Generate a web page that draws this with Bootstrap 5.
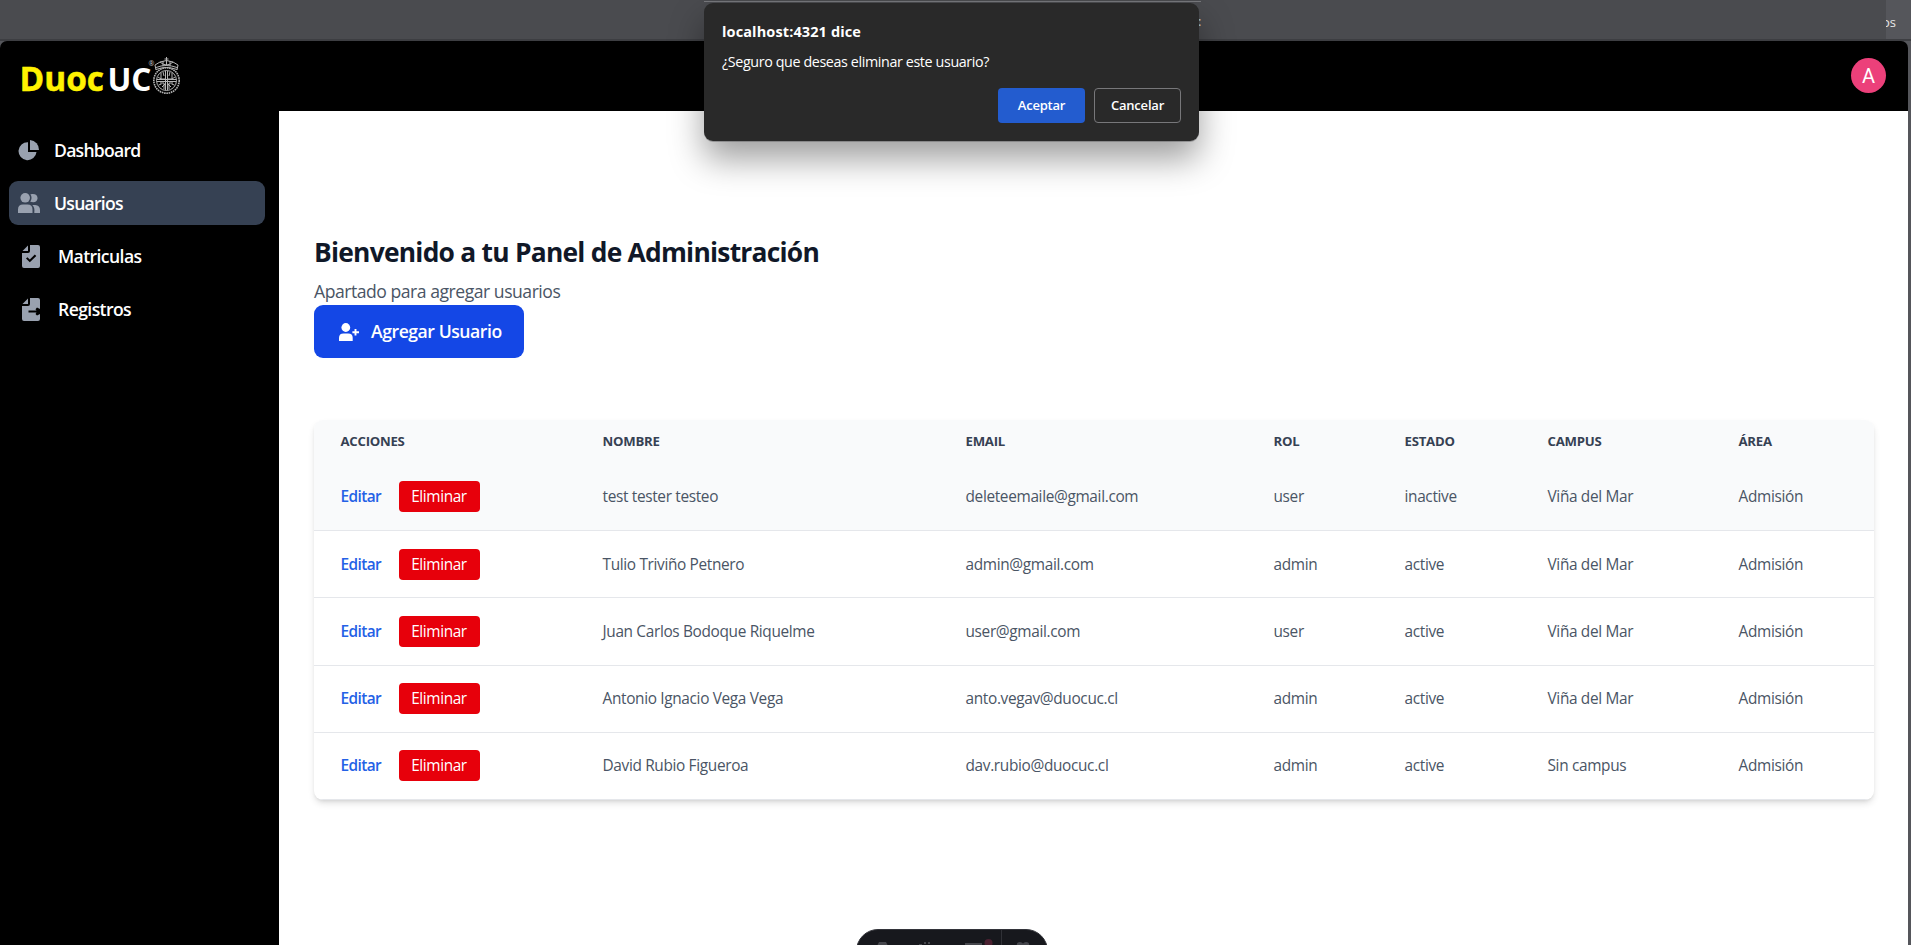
<!DOCTYPE html>
<html lang="es">
<head>
<meta charset="utf-8">
<meta name="viewport" content="width=device-width, initial-scale=1">
<title>Panel de Administración</title>
<link href="https://cdn.jsdelivr.net/npm/bootstrap@5.3.0/dist/css/bootstrap.min.css" rel="stylesheet">
<style>
  body { font-family: "Open Sans", "Noto Sans", sans-serif; font-size: 15.4px; color: #4a5565; background: #55565b; height: 945px; overflow: hidden; }
  .browser-bar { height: 41px; background: #4a4b4f; border-bottom: 2px solid #3d3e42; }
  .bar-end { width: 25px; background: #55565b; color: #e8e8e8; font-size: 13px; line-height: 45px; overflow: hidden; }
  .bar-end span { margin-left: -4px; }
  .app-shell { width: 1908px; height: 904px; background: #000; border-radius: 7px 7px 0 0; overflow: hidden; }
  .app-head { height: 70px; padding: 0 21px 0 18px; }
  .brand-mark { width: 170px; height: 54px; margin-top: 0; }
  .avatar { width: 35px; height: 35px; background: #ec407a; color: #fff; font: 20px Roboto, sans-serif; margin: 0 1px 1px 0; }
  .side { width: 279px; padding: 17px 14px 0 9px; }
  .side .nav-link { height: 44px; padding: 0 0 0 9px; margin-bottom: 9px; border-radius: 9px; color: #fff; font-size: 17.6px; font-weight: 600; letter-spacing: -.75px; }
  .side .nav-link.active { background: #364153; color: #fff; }
  .side svg { fill: #99a1af; width: 22px; height: 22px; flex: none; }
  .side .nav-link span { margin-left: 14px; line-height: 24px; }
  .side .doc svg { width: 18px; height: 23px; margin-left: 4px; }
  .side .doc span { margin-left: 18px; letter-spacing: -.6px; }
  .page { padding: 121px 34px 0 35px; }
  h1.title { font-size: 26.4px; font-weight: 700; color: #101828; line-height: 40px; margin: 0; letter-spacing: -.76px; }
  .sub { font-size: 17.6px; line-height: 28px; height: 33px; padding-top: 5px; letter-spacing: -.48px; }
  .btn-add { width: 210px; height: 53px; background: #1447e6; color: #fff; border-radius: 9px; font-size: 17.6px; font-weight: 600; letter-spacing: -.45px; padding: 0 0 0 25px; border: 0; }
  .btn-add:hover { background: #1447e6; color: #fff; }
  .user-card { margin: 62px 1px 0 0; border-radius: 9px; overflow: hidden; background: #fff; box-shadow: 0 4px 7px -1px rgba(0,0,0,.13), 0 2px 4px -2px rgba(0,0,0,.12); }
  .user-table { table-layout: fixed; width: 1560px; color: #4a5565; border-collapse: collapse; letter-spacing: -.34px; }
  .user-table th { height: 43.5px; padding: 1px 0 0 26.5px; font-size: 13.2px; font-weight: 700; color: #364153; letter-spacing: -.25px; }
  .user-table td { height: 67.2px; padding: 0 0 0 26.5px; border-bottom: 1px solid #e5e7eb; white-space: nowrap; }
  .user-table thead, .row-hover { background: #f9fafb; }
  .edit { color: #2461e6; font-weight: 600; text-decoration: none; width: 58px; letter-spacing: -.6px; }
  .btn-del { width: 81px; height: 31px; background: #e7000b; color: #fff; border: 0; border-radius: 4px; padding: 0; font-size: 15.4px; letter-spacing: -.4px; }
  .dialog-box { left: 704px; top: 3px; width: 495px; height: 138px; background: #292929; border-radius: 9px; color: #fff; padding: 18px 18px 0; box-shadow: 0 1px 0 0 rgba(90,90,94,.45), 0 18px 34px rgba(0,0,0,.38); font-size: 14.3px; z-index: 5; }
  .dialog-box .host { font-weight: 700; font-size: 14.5px; line-height: 22px; letter-spacing: .12px; }
  .dialog-box .ask { line-height: 20px; margin-top: 9px; letter-spacing: -.38px; }
  .dialog-box .btn { width: 87px; height: 35px; padding: 0; font-size: 13px; font-weight: 600; border-radius: 4px; color: #fff; letter-spacing: -.2px; }
  .dialog-box .ok { background: #235ccf; border: 0; }
  .dialog-box .no { border: 1px solid #77777a; margin-left: 9px; }
  .bar-edge { left: 704px; top: 1px; width: 497px; height: 1px; background: #77787c; }
  .bar-colon { left: 1198px; top: 12px; color: #d7d7d7; font-size: 13px; z-index: 1; }
  .dev-dock { left: 856px; top: 929px; width: 192px; height: 44px; border-radius: 22px; background: #17181d; border: 1px solid #33343a; }
</style>
</head>
<body class="position-relative">
<div class="browser-bar d-flex justify-content-end"><div class="bar-end"><span>os</span></div></div>
<div class="position-absolute bar-edge"></div>
<div class="position-absolute bar-colon">:</div>

<div class="app-shell d-flex flex-column">
  <header class="app-head d-flex align-items-center justify-content-between">
    <svg class="brand-mark" viewBox="0 0 170 54">
      <g font-family="Open Sans, sans-serif" font-weight="700">
        <text x="1.500" y="41.700" font-size="34" fill="#fff200" stroke="#fff200" stroke-width=".5" textLength="84.500" lengthAdjust="spacingAndGlyphs">Duoc</text>
        <text x="89.500" y="41.700" font-size="32" font-weight="700" fill="#fff" textLength="44" lengthAdjust="spacingAndGlyphs">UC</text>
        <text x="130.500" y="17" font-size="7" font-weight="400" fill="#ccc">®</text>
      </g>
      <g transform="translate(4 8)" fill="none" stroke="#b5b5b5" stroke-width="1">
        <circle cx="144.500" cy="23.500" r="12.700" stroke-width="1.600" stroke-dasharray="1.600 .7"/>
        <circle cx="144.500" cy="23.500" r="10"/>
        <path d="M143.500 14v19M145.500 14v19M135 22.500h19M135 24.500h19M139 16v6h4M150 16v6h-4M138 26h4v6M151 26h-4v6M136 20l3 2M153 20l-3 2M136.500 28l3-1M152.500 28l-3-1M141 15l1 4M148 15l-1 4M140 30l3-3M149 30l-3-3" stroke-width="1"/>
        <path d="M134 13l-1-5 5-3 6.500-1.500L151 5l5 3-1 5M134 10.500q10-4 21 0M134 12.500q10-4 21 0M138 5q6.500 6 13 0M141 4v5M148 4v5M144.500 0v8M142.500 2h4" stroke-width="1"/>
      </g>
    </svg>
    <div class="avatar rounded-circle d-flex align-items-center justify-content-center">A</div>
  </header>

  <div class="d-flex flex-grow-1">
    <nav class="side nav flex-column flex-nowrap flex-shrink-0">
      <a class="nav-link d-flex align-items-center" href="#">
        <svg viewBox="0 0 22 22"><path d="M10 3.200A9 9 0 1 0 18.500 13H10z"/><path d="M12 1v10h9A9.500 9.500 0 0 0 12 1z"/></svg><span>Dashboard</span></a>
      <a class="nav-link active d-flex align-items-center" href="#">
        <svg viewBox="0 0 22 22"><circle cx="7.200" cy="5.800" r="4.800"/><path d="M0 21v-3.500Q0 12.500 5 12.500h4.500q5 0 5 5V21zM12.200 9.800q2.600-3.900.2-7.500 7-1.200 7.200 4-.8 5.400-7.400 3.500zM16.300 21q.8-5.500-2-8h3q4.700.5 4.700 5v3z"/></svg><span>Usuarios</span></a>
      <a class="nav-link doc d-flex align-items-center" href="#">
        <svg viewBox="0 0 18 23"><path fill-rule="evenodd" d="M8 0h8q2 0 2 2v19q0 2-2 2H2q-2 0-2-2V8h6q2 0 2-2zM4 13.500l3.800 3.800 6.500-6.300-1.500-1.400-5 5-2.400-2.400z"/><path d="M6 .5V6H.5z"/></svg><span>Matriculas</span></a>
      <a class="nav-link doc d-flex align-items-center" href="#">
        <svg viewBox="0 0 18 23"><path d="M8 0h8q2 0 2 2v9l-3-1.500-1.500 1.700 1 1.300H6.500v2h8l-1 1.500L15 17.500l3-1.500v5q0 2-2 2H2q-2 0-2-2V8h6q2 0 2-2z"/><path d="M6 .5V6H.5z"/></svg><span>Registros</span></a>
    </nav>

    <main class="page flex-grow-1 bg-white">
      <h1 class="title">Bienvenido a tu Panel de Administración</h1>
      <div class="sub">Apartado para agregar usuarios</div>
      <button class="btn btn-add d-flex align-items-center">
        <svg width="20" height="18" viewBox="0 0 20 18" fill="#fff"><circle cx="6.800" cy="4.500" r="4.400"/><path d="M0 18v-3.200Q0 10.500 4.500 10.500h4.700q4.500 0 4.500 4.300V18z"/><path d="M16.500 6v6.500M13.400 9.200H20" stroke="#fff" stroke-width="1.900"/></svg>
        <span class="ms-2 ps-1">Agregar Usuario</span>
      </button>

      <div class="user-card">
        <table class="user-table">
          <colgroup><col style="width:262px"><col style="width:363px"><col style="width:308px"><col style="width:131px"><col style="width:143px"><col style="width:191px"><col></colgroup>
          <thead><tr><th>ACCIONES</th><th>NOMBRE</th><th>EMAIL</th><th>ROL</th><th>ESTADO</th><th>CAMPUS</th><th>ÁREA</th></tr></thead>
          <tbody>
            <tr class="row-hover"><td><div class="d-flex align-items-center"><a class="edit" href="#">Editar</a><button class="btn btn-del">Eliminar</button></div></td><td>test tester testeo</td><td>deleteemaile@gmail.com</td><td>user</td><td>inactive</td><td>Viña del Mar</td><td>Admisión</td></tr>
            <tr><td><div class="d-flex align-items-center"><a class="edit" href="#">Editar</a><button class="btn btn-del">Eliminar</button></div></td><td>Tulio Triviño Petnero</td><td>admin@gmail.com</td><td>admin</td><td>active</td><td>Viña del Mar</td><td>Admisión</td></tr>
            <tr><td><div class="d-flex align-items-center"><a class="edit" href="#">Editar</a><button class="btn btn-del">Eliminar</button></div></td><td>Juan Carlos Bodoque Riquelme</td><td>user@gmail.com</td><td>user</td><td>active</td><td>Viña del Mar</td><td>Admisión</td></tr>
            <tr><td><div class="d-flex align-items-center"><a class="edit" href="#">Editar</a><button class="btn btn-del">Eliminar</button></div></td><td>Antonio Ignacio Vega Vega</td><td>anto.vegav@duocuc.cl</td><td>admin</td><td>active</td><td>Viña del Mar</td><td>Admisión</td></tr>
            <tr><td><div class="d-flex align-items-center"><a class="edit" href="#">Editar</a><button class="btn btn-del">Eliminar</button></div></td><td>David Rubio Figueroa</td><td>dav.rubio@duocuc.cl</td><td>admin</td><td>active</td><td>Sin campus</td><td>Admisión</td></tr>
          </tbody>
        </table>
      </div>
    </main>
  </div>
</div>

<div class="dialog-box position-absolute" role="dialog">
  <div class="host">localhost:4321 dice</div>
  <div class="ask">¿Seguro que deseas eliminar este usuario?</div>
  <div class="d-flex justify-content-end mt-3"><button class="btn ok">Aceptar</button><button class="btn no">Cancelar</button></div>
</div>

<div class="dev-dock position-absolute">
  <svg class="d-block" width="190" height="16" viewBox="0 0 190 16" fill="#45464c"><path d="M20 16l2-4h7l2 4z"/><path d="M62 14h3v2h-3zM67 12h2v2h-2zM71 12h2v2h-2z"/><path d="M108 13h17v3h-17z"/><circle cx="131.500" cy="13" r="4" fill="#4a2030"/><path d="M144 0h1v16h-1z" fill="#303137"/><path d="M160 16q-1-4 3-4 2 0 3 1.500 1-1.500 3-1.500 4 0 3 4z"/></svg>
</div>
<script src="https://cdn.jsdelivr.net/npm/bootstrap@5.3.0/dist/js/bootstrap.bundle.min.js"></script>
</body>
</html>
